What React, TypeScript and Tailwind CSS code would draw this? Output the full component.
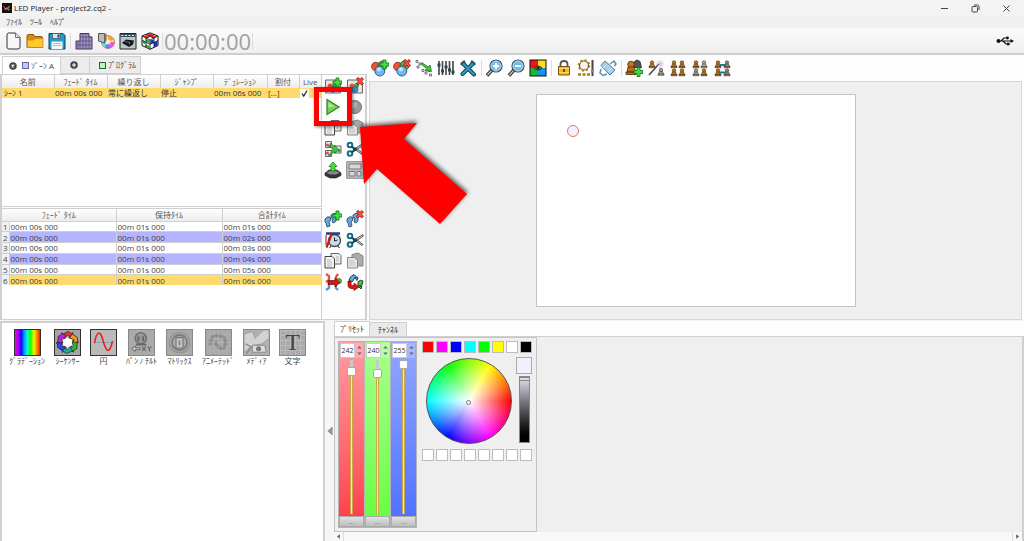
import { useState } from 'react'
import type { ReactNode } from 'react'

type Tool = { label: string; icon: ReactNode }

function Svg({ children, className = 'size-[18px]' }: { children: ReactNode; className?: string }) {
  return (
    <svg viewBox="0 0 18 18" className={className} fill="none" aria-hidden="true">
      {children}
    </svg>
  )
}

/* Badges shared by several icons */
const plusBadge = (
  <path d="M12 1h3v3h3v3h-3v3h-3V7H9V4h3z" fill="#3fe03f" stroke="#136c13" strokeWidth=".8" />
)
const crossBadge = (
  <path
    d="M10.5 1.5 12.5.5 14 2.6 15.600.5 17.500 2 15.600 4.300 17.500 6.500 15.500 8 14 6 12 8 10.400 6.500 12.300 4.300z"
    fill="#ff4d3d"
    stroke="#971414"
    strokeWidth=".8"
  />
)
const balls = (
  <>
    <circle cx="4.800" cy="7.500" r="4.200" fill="#f0562f" stroke="#5d2a18" strokeWidth=".8" />
    <circle cx="11.500" cy="6.500" r="4.500" fill="#4fae3c" stroke="#27502a" strokeWidth=".8" />
    <circle cx="8.800" cy="12" r="5" fill="#6db8f2" stroke="#24415c" strokeWidth=".8" />
    <circle cx="8" cy="10.500" r="2" fill="#c6e6ff" />
  </>
)
const steps = (
  <>
    <path
      d="M1 9q2-3 5-2l1 3-2 2 1 4-3 1-1-4-1-1zM7 5q3-3 6-1l-1 3 0 4-2 2-2-1 1-4-2 0z"
      fill="#65a9e3"
      stroke="#213c55"
      strokeWidth=".8"
    />
  </>
)
const pages = (
  <>
    <path d="M7 1.500h8l2 2V12H7z" fill="#eee" stroke="#666" />
    <path d="M1 4.500h7l2.500 2.500v9H1z" fill="#f4f4f4" stroke="#444" />
    <path d="M3 8h4M3 10h5M3 12h5M3 14h5M12 5h3M12 7h3M12 9h3" stroke="#aaa" strokeWidth=".8" />
  </>
)
const paste = (
  <>
    <path d="M6 2.500 12 1l5 3v10H6z" fill="#aaa" stroke="#888" />
    <path d="M1.500 5.500h7l3 3V16h-10z" fill="#e3e3e3" stroke="#888" />
    <path d="M3 9h5M3 11h6M3 13h6" stroke="#bbb" strokeWidth=".8" />
  </>
)
const scissors = (
  <>
    <path d="M7 9.500 17 3.500v2l-8 5zM7 8l3 0 7 5.500-1 1z" fill="#c9d4d6" stroke="#333" strokeWidth=".8" />
    <circle cx="4" cy="5" r="2.300" stroke="#11708a" strokeWidth="2" />
    <circle cx="4" cy="13.500" r="2.300" stroke="#11708a" strokeWidth="2" />
    <path d="m5.500 6.500 4 3-4 3" stroke="#0b4558" strokeWidth="2" />
  </>
)
const sceneCard = (
  <>
    <path d="M1.500 3h12l3 3v10h-15z" fill="#e6e6e6" stroke="#666" />
    <circle cx="6" cy="9" r="2.500" fill="#e45131" />
    <circle cx="10.500" cy="8.500" r="2.500" fill="#43a63c" />
    <circle cx="9" cy="12.500" r="3" fill="#3c8bd4" stroke="#234d79" strokeWidth=".6" />
  </>
)
const lens = (
  <>
    <path d="m7 11-5 5.500" stroke="#333" strokeWidth="3.500" />
    <path d="m6.500 11.500-4 4.500" stroke="#ccc" strokeWidth="1.200" />
    <circle cx="11" cy="7" r="6" fill="#6bbcf0" stroke="#4a4a4a" strokeWidth="1.200" />
    <circle cx="11" cy="7" r="5" stroke="#c3e4f8" strokeWidth=".8" />
  </>
)
const figure = (x: number, y: number, color: string) => (
  <g key={`${x}-${y}`} fill={color} stroke="#3c2a17" strokeWidth=".5">
    <circle cx={x + 3} cy={y + 2} r="1.800" />
    <path d={`M${x + 1.5} ${y + 3.500}h3l1.500 3h-6z`} />
    <path d={`M${x} ${y + 6}h6v1.300h-6z`} />
  </g>
)

const fileTools: Tool[] = [
  {
    label: '新規',
    icon: (
      <Svg>
        <path d="M4.500 1h7L16 5.500V15q0 2-2 2H5q-2 0-2-2V3q0-2 1.500-2z" fill="#f5f7f8" stroke="#333" />
        <path d="M11.500 1v4.500H16" fill="#d8dcde" stroke="#555" strokeWidth=".8" />
      </Svg>
    ),
  },
  {
    label: '開く',
    icon: (
      <Svg>
        <path d="M1 4q0-1.500 1.500-1.500h5l1.500 2h6q1.500 0 1.500 1.500v9.500H1z" fill="#d88a0a" stroke="#8d5a09" />
        <path d="M1.500 15.500V8h6l1.500-1.500h8v9z" fill="#ffc62e" stroke="#c98612" strokeWidth=".8" />
      </Svg>
    ),
  },
  {
    label: '保存',
    icon: (
      <Svg>
        <path d="M1 1.500h14l2 2V17H1z" fill="#1c9fd0" stroke="#0b3f57" />
        <path d="M4.500 1.500h8v5h-8z" fill="#dfe4e6" stroke="#27566b" strokeWidth=".7" />
        <path d="M9.500 2.500h2v3h-2z" fill="#333" />
        <path d="M3.500 9.500h11V17h-11z" fill="#f6f6f6" />
        <path d="M5 11.500h8M5 13.500h8" stroke="#aac" strokeWidth=".8" />
      </Svg>
    ),
  },
]

const setupTools: Tool[] = [
  {
    label: 'パッチ',
    icon: (
      <Svg>
        <path d="M1 9h4V1.500h9V5h3v12H1z" fill="#a193c6" stroke="#40375a" />
        <path
          d="M5 5h12M5 9h12M1 13h16M5 9v8M8 2v15M11 2v15M14 5v12M3 9v8"
          stroke="#5a4f7a"
          strokeWidth=".8"
        />
      </Svg>
    ),
  },
  {
    label: 'カラー',
    icon: (
      <Svg>
        <circle cx="11" cy="10" r="6.500" fill="#ffe75c" stroke="#666" strokeWidth=".6" />
        <path d="M11 10V3.500a6.500 6.500 0 0 1 6 4z" fill="#f8a13c" />
        <path d="m11 10 6.500 0a6.500 6.500 0 0 1-4 6z" fill="#ef55cf" />
        <path d="m11 10 2.500 6a6.500 6.500 0 0 1-6-1z" fill="#6b77ff" />
        <path d="m11 10-3.500 5a6.500 6.500 0 0 1-3-5z" fill="#54ddd9" />
        <circle cx="11" cy="10" r="2.500" fill="#fff" opacity=".75" />
        <path d="M1.500 1.500h6v9.500l-6-2z" fill="#bcbcbc" stroke="#555" />
        <path d="M7.500 1.500h2v7.500l-2 2z" fill="#777" />
      </Svg>
    ),
  },
  {
    label: 'デバイス',
    icon: (
      <Svg>
        <path d="M1 1.500h16V17H1z" fill="#bcc5cb" stroke="#222" />
        <path d="M1.500 2h15v3h-15z" fill="#394f63" />
        <path d="M2.500 3.500h2M6 3.500h2M9.500 3.500h2M13 3.500h2" stroke="#e8edf0" />
        <path d="m3 11 4-3.500 8 1-1 4-4 2.500z" fill="#171717" />
        <path d="m6 9.500 5 1-1 2" stroke="#888" strokeWidth=".8" />
      </Svg>
    ),
  },
  {
    label: '3D',
    icon: (
      <Svg>
        <path d="M9 .8 17 4v9.500L9 17.300 1 13.500V4z" fill="#fff" stroke="#111" />
        <path d="m9 1.300 3.500 1.500L9 4.300 5.500 2.800zM5 3.400l3.500 1.500L5.500 6 2 4.500zM13 3.400l3 1.100L12.500 6 9.500 4.700z" fill="#e32525" />
        <path d="m1.500 8 2.500 1v3l-2.500-1zM4.500 12.500 8.500 14v3l-4-1.800zM5 7l3.500 1.500V11L5 9.800z" fill="#20b23a" />
        <path d="m9.500 8.500 3.200-1.300V11l-3.200 1.200zM13 10.500l3.500-1.500v4.500L13 15z" fill="#1730e0" />
        <path d="m1 4 8 4 8-4M9 8v9M5 6v9.500M13 6v9.500M1 8.500l8 3.800 8-3.800M4.500 2.500l8.500 3.600M13.500 2.500 5 6.200" stroke="#111" strokeWidth=".8" />
      </Svg>
    ),
  },
]

const stageGroups: Tool[][] = [
  [
    { label: '追加', icon: <Svg>{balls}{plusBadge}</Svg> },
    { label: '削除', icon: <Svg>{balls}{crossBadge}</Svg> },
    {
      label: '整列',
      icon: (
        <Svg>
          <path d="M1 1.500h2v2H1zM4 4h2v2H4zM2 7h2v2H2zM10 13h2v2h-2zM13 10.500h2v2h-2zM14.500 15h2v2h-2zM7 10.500h2v2H7z" fill="#fff" stroke="#444" strokeWidth=".7" />
          <path d="m7 3.500 6 4.500 2-2 1.500 6.500-6.500-1 1.500-2L6 5z" fill="#3fc43b" stroke="#1d691b" strokeWidth=".7" />
        </Svg>
      ),
    },
    {
      label: 'フェーダー',
      icon: (
        <Svg>
          <path d="M2 2v14M5.500 2v14M9 2v14M12.500 2v14M16 2v14" stroke="#444" strokeWidth="1.600" />
          <path d="M.5 6h3M4 12h3M7.500 8h3M11 11h3M14.500 13h3" stroke="#2c4655" strokeWidth="3" />
        </Svg>
      ),
    },
    {
      label: '設定',
      icon: (
        <Svg>
          <path d="m4 4.500 11 11M14 4.500 3.500 15" stroke="#123f50" strokeWidth="4" strokeLinecap="round" />
          <path d="M1.500 4.500 4.500 6 6 4.500 4.500 1.500M16.500 4.500 13.500 6 12 4.500l1.500-3" stroke="#1b5d75" strokeWidth="2" />
          <path d="m4.500 5 10.500 10.500M13.500 5 3.500 15" stroke="#2f9fc0" strokeWidth="2" strokeLinecap="round" />
        </Svg>
      ),
    },
  ],
  [
    {
      label: '拡大',
      icon: (
        <Svg>
          {lens}
          <path d="M11 4v6M8 7h6" stroke="#fff" strokeWidth="2" />
        </Svg>
      ),
    },
    {
      label: '縮小',
      icon: (
        <Svg>
          {lens}
          <path d="M8 7h6" stroke="#fff" strokeWidth="2" />
        </Svg>
      ),
    },
    {
      label: '表示',
      icon: (
        <Svg>
          <path d="M.5.5h17v17H.5z" fill="#111" />
          <path d="M1.500 1.500H9V9H1.500z" fill="#f01414" />
          <path d="M9 1.500h7.500V9H9z" fill="#ffdf12" />
          <path d="M1.500 9H9v7.500H1.500z" fill="#16bb2d" />
          <path d="M9 9h7.500v7.500H9z" fill="#1592ea" />
          <path d="M5 9q4-4 8 0-4 4-8 0z" fill="#777" stroke="#333" />
          <circle cx="9" cy="9" r="1.500" fill="#222" />
        </Svg>
      ),
    },
  ],
  [
    {
      label: 'ロック',
      icon: (
        <Svg>
          <path d="M5.500 8V5q0-3 3.500-3t3.500 3v3" stroke="#555" strokeWidth="1.800" />
          <path d="M3.500 7.500h11v8.500h-11z" fill="#f8b516" stroke="#80560a" />
          <path d="M4 9.500h10M4 13.500h10" stroke="#ffd966" />
          <path d="M9 10v3" stroke="#432" strokeWidth="1.600" />
        </Svg>
      ),
    },
    {
      label: 'グリッド',
      icon: (
        <Svg>
          <circle cx="7" cy="6.500" r="4.500" fill="#f4f4f4" stroke="#76520c" strokeWidth="1.200" />
          <circle cx="7" cy="6.500" r="5.500" stroke="#b17b11" strokeWidth="1.600" strokeDasharray="2 2.300" />
          <path d="M1 15.500h3M5.500 15.500h3M10 15.500h3" stroke="#b17b11" strokeWidth="2.500" />
          <path d="M15.500 1v16" stroke="#444" strokeWidth="2" />
          <path d="M14 12h3" stroke="#888" strokeWidth="3" />
        </Svg>
      ),
    },
    {
      label: '回転',
      icon: (
        <Svg>
          <path d="m6 2 10 9-5 5L2 6.500z" fill="#a9cfe9" stroke="#547c98" />
          <path d="m11 5 4-3 2 3-1.500 2M2 10l-1 4 3 2.500 4-1.500" stroke="#5b8db0" strokeWidth="1.500" />
          <path d="m3 10 4-4M9 13l4-4" stroke="#d6e9f5" />
        </Svg>
      ),
    },
  ],
  [
    {
      label: 'グループ追加',
      icon: (
        <Svg>
          <path d="M9.500 2.500 12 1l3 1.500 1.500 6H9z" fill="#555" stroke="#222" strokeWidth=".8" />
          <circle cx="6" cy="5.500" r="3.300" fill="#c2761a" stroke="#50300b" strokeWidth=".8" />
          <path d="M3 8h6l2 5H2zM1 13h10v2.500H1z" fill="#b96e14" stroke="#50300b" strokeWidth=".8" />
          <g transform="translate(0 7.500)">{plusBadge}</g>
        </Svg>
      ),
    },
    {
      label: 'グループ選択',
      icon: (
        <Svg>
          {figure(2, 1.5, '#c17a20')}
          {figure(11, 9, '#999')}
          <path d="M2 16 12 5" stroke="#444" strokeWidth="1.500" />
          <path d="M13 1v8M9 5h8M10 2l6 6M16 2l-6 6" stroke="#d1a6e6" strokeWidth=".8" />
        </Svg>
      ),
    },
    {
      label: 'グループ',
      icon: (
        <Svg>
          {figure(2, 1.5, '#b87218')}
          {figure(10, 1.5, '#b87218')}
          {figure(2, 9.5, '#b87218')}
          {figure(10, 9.5, '#b87218')}
        </Svg>
      ),
    },
    {
      label: 'グループ解除',
      icon: (
        <Svg>
          {figure(2, 1.5, '#b87218')}
          {figure(10, 1.5, '#aaa')}
          {figure(2, 9.5, '#999')}
          {figure(10, 9.5, '#b87218')}
        </Svg>
      ),
    },
    {
      label: 'グループ入替',
      icon: (
        <Svg>
          {figure(2, 1.5, '#b87218')}
          {figure(11, 1.5, '#888')}
          {figure(2, 9.5, '#b87218')}
          {figure(11, 9.5, '#888')}
          <path d="M6 6h7M6 13.500h7" stroke="#1e7890" strokeWidth="1.800" />
        </Svg>
      ),
    },
  ],
]

const sceneTools: Tool[] = [
  { label: 'シーン追加', icon: <Svg>{sceneCard}{plusBadge}</Svg> },
  { label: 'シーン削除', icon: <Svg>{sceneCard}{crossBadge}</Svg> },
  {
    label: '再生',
    icon: (
      <Svg>
        <path d="M3 1.500 15 9 3 16.500z" fill="#6fd94d" stroke="#3a7a31" strokeWidth="1.200" />
        <path d="M4.500 4.500 11 8.500l-6.500 1z" fill="#a5ee8d" />
      </Svg>
    ),
  },
  {
    label: '停止',
    icon: (
      <Svg>
        <circle cx="9" cy="9" r="6.500" fill="#999" stroke="#777" />
        <circle cx="8" cy="7" r="3" fill="#b3b3b3" />
      </Svg>
    ),
  },
  { label: 'コピー', icon: <Svg>{pages}</Svg> },
  { label: '貼り付け', icon: <Svg>{paste}</Svg> },
  {
    label: '結合',
    icon: (
      <Svg>
        <path d="M1.500 1.500h6v6h-6zM1.500 10.500h6v6h-6zM11 6h6v7h-6z" fill="#e6e6e6" stroke="#666" />
        <circle cx="3.500" cy="5" r="1.500" fill="#e45131" />
        <circle cx="5.500" cy="6" r="1.500" fill="#3c8bd4" />
        <circle cx="3.500" cy="13" r="1.500" fill="#e45131" />
        <circle cx="5.500" cy="15" r="1.500" fill="#3c8bd4" />
        <circle cx="15" cy="10.500" r="1.800" fill="#43a63c" />
        <path d="m6.500 3 4 4 0-2 4 4.500-4 4v-2l-4 3.500 1-4.500 2-1-3-2z" fill="#49c53c" stroke="#1d691b" strokeWidth=".7" />
      </Svg>
    ),
  },
  { label: '切り取り', icon: <Svg>{scissors}</Svg> },
  {
    label: '書き出し',
    icon: (
      <Svg>
        <path d="m1 12 4-3h8l4 3v2.500l-5 2.500H6l-5-2.500z" fill="#333" stroke="#222" strokeWidth=".6" />
        <path d="m2.500 12 3-2h7l3 2-3.500 1.500H6z" fill="#888" />
        <path d="m9 1 4 4.500h-2V10H7V5.500H5z" fill="#4be03f" stroke="#1d7a1b" strokeWidth=".8" />
      </Svg>
    ),
  },
  {
    label: 'レイアウト',
    icon: (
      <Svg>
        <path d="M.7.7h16.600v16.600H.7z" fill="#c2c2c2" stroke="#888" />
        <path d="M3 3h12v5H3zM3 10.500h6V15H3zM11 10.500h4V15h-4z" fill="#d8d8d8" stroke="#777" />
      </Svg>
    ),
  },
]

const stepTools: Tool[] = [
  { label: 'ステップ追加', icon: <Svg>{steps}{plusBadge}</Svg> },
  { label: 'ステップ削除', icon: <Svg>{steps}{crossBadge}</Svg> },
  {
    label: 'タイム',
    icon: (
      <Svg>
        <circle cx="10.500" cy="9.500" r="6" fill="#c4dcec" stroke="#444" strokeWidth="1.300" />
        <path d="M10.500 6.500V10l3-1M7 15l-1.500 2M14 15l1.500 2" stroke="#222" />
        <path d="M2 2.500h14" stroke="#1e3f7c" strokeWidth="2.500" />
        <path d="M8 2 2.500 16.500" stroke="#c91717" strokeWidth="2.200" />
        <path d="M2 4v10" stroke="#a33" strokeWidth="1.200" />
      </Svg>
    ),
  },
  { label: 'ステップ切り取り', icon: <Svg>{scissors}</Svg> },
  { label: 'ステップコピー', icon: <Svg>{pages}</Svg> },
  { label: 'ステップ貼り付け', icon: <Svg>{paste}</Svg> },
  {
    label: '右へ移動',
    icon: (
      <Svg>
        <path d="m2 1 3 2v4L2 9M14 1l-2 3v3" stroke="#e35050" strokeWidth="2.300" />
        <path d="m2 17 3-2v-4M14 17l-2-2v-3" stroke="#4b9ad8" strokeWidth="2.300" />
        <circle cx="15" cy="8" r="2.500" fill="#4bc44d" stroke="#1d691b" strokeWidth=".7" />
        <path d="M4 7.500h7V5l5 4.500L11 14v-2.500H4z" fill="#e01414" stroke="#6d0d0d" strokeWidth=".7" />
      </Svg>
    ),
  },
  {
    label: '順番変更',
    icon: (
      <Svg>
        <path d="M3 7q1-4 5-5.500l2 2-2 2.500-2 3zM9 4.500q2-1 3 0l-1 3z" fill="#65a9e3" stroke="#213c55" />
        <path d="M12 9q2-3 5-1l-1 4-4 1zM13 14l3-1-1 3z" fill="#4cc34a" stroke="#1d491b" />
        <path d="M2 8v4q0 4 5 3.500h1V17.500l5-3.500-5-4v2.500H6q-1 0-1-1.500V8z" fill="#e01414" stroke="#6d0d0d" strokeWidth=".7" />
      </Svg>
    ),
  },
]

const recycleColors = ['#f03030', '#f59b1b', '#2bc02b', '#1faaa8', '#2c45e8', '#c31ee0']

const effects: Tool[] = [
  {
    label: 'ｸﾞﾗﾃﾞｰｼｮﾝ',
    icon: (
      <span className="block size-full bg-[linear-gradient(to_right,#ff00c8,#a000ff,#1a00ff,#00a2ff,#00ffd0,#1aff00,#e5ff00,#ff8c00,#ff1500)]" />
    ),
  },
  {
    label: 'ｼｰｹﾝｻｰ',
    icon: (
      <Svg className="size-full">
        <path d="M0 0h18v18H0z" fill="#a5a5a5" />
        <circle cx="9" cy="9" r="5" fill="#fff" />
        {recycleColors.map((color, i) => (
          <path
            key={color}
            d="M5.500 3 9.500 1l2.500 1.500.8-.8.2 4-3.500-.5.8-.9-1-.3L7 6.300z"
            fill={color}
            stroke="#222"
            strokeWidth=".5"
            transform={`rotate(${i * 60} 9 9)`}
          />
        ))}
      </Svg>
    ),
  },
  {
    label: '円',
    icon: (
      <Svg className="size-full">
        <path d="M0 0h18v18H0z" fill="#b9b9b9" />
        <path d="M2 9h14" stroke="#7aa2b8" strokeWidth=".6" />
        <path d="M2.500 9.500C4 1 6.500-.5 8.500 7s4.500 12 7 1" stroke="#e81c1c" strokeWidth="1.100" />
      </Svg>
    ),
  },
  {
    label: 'ﾊﾟﾝ / ﾁﾙﾄ',
    icon: (
      <Svg className="size-full">
        <path d="M0 0h18v18H0z" fill="#aaa" />
        <circle cx="8.500" cy="6" r="4" fill="#999" stroke="#707070" strokeWidth="1.200" />
        <path d="M6.800 8V4.500M10.200 8V4.500M5 10.500h7.500" stroke="#666" strokeWidth="1.300" />
        <path d="m2 13.500 2.500-2v1.300H8v1.400H4.500v1.300z" stroke="#666" strokeWidth=".7" fill="#ccc" />
        <path d="m9.500 12 2.500 3M12 12l-2.500 3M13.500 12l1.200 1.500L16 12M14.700 13.500v2" stroke="#666" strokeWidth=".8" />
      </Svg>
    ),
  },
  {
    label: 'ﾏﾄﾘｯｸｽ',
    icon: (
      <Svg className="size-full">
        <path d="M0 0h18v18H0z" fill="#aaa" />
        <circle cx="9" cy="9" r="7.300" stroke="#959595" />
        <circle cx="9" cy="9" r="5.400" stroke="#7d7d7d" strokeWidth="1.300" />
        <path d="M6.500 5.500h5v7.500h-5z" fill="#c5c5c5" stroke="#777" strokeWidth=".8" />
        <path d="M9 7.500V11" stroke="#777" />
      </Svg>
    ),
  },
  {
    label: 'ｱﾆﾒｰﾃｯﾄﾞ',
    icon: (
      <Svg className="size-full">
        <path d="M0 0h18v18H0z" fill="#a8a8a8" />
        <path d="M3 11Q3 3 9 4t5 6-5 2-1-3" stroke="#8a8a8a" strokeWidth="2.500" />
        <path d="M0 3h18M0 6h18M0 9h18M0 12h18M0 15h18M3 0v18M6 0v18M9 0v18M12 0v18M15 0v18" stroke="#bdbdbd" strokeWidth=".3" />
      </Svg>
    ),
  },
  {
    label: 'ﾒﾃﾞｨｱ',
    icon: (
      <Svg className="size-full">
        <path d="M0 0h18v18H0z" fill="#b0b0b0" />
        <path d="m0 3 6-2 2 5 6-6h4v6l-5 4-6 1-7 5z" fill="#d2d2d2" stroke="#9a9a9a" strokeWidth=".6" />
        <path d="M6 11h9l1 5H6z" fill="#dcdcdc" stroke="#888" strokeWidth=".7" />
        <circle cx="10.500" cy="13.500" r="1.800" fill="#777" />
        <path d="m1 10 4 2-3 5" stroke="#888" />
      </Svg>
    ),
  },
  {
    label: '文字',
    icon: (
      <span className="block size-full bg-[#aaa] bg-[linear-gradient(#bbb_1px,transparent_1px),linear-gradient(90deg,#bbb_1px,transparent_1px)] bg-size-[5px_5px] text-center text-[24px] leading-[25px] text-[#444] [font-family:'Liberation_Serif',serif]">
        T
      </span>
    ),
  },
]

const scenes = [
  { name: 'ｼｰﾝ 1', fade: '00m 00s 000', repeat: '常に繰返し', jump: '停止', duration: '00m 06s 000', assign: '[...]' },
]

const stepRows = [1, 2, 3, 4, 5, 6].map((n) => ({ n, fade: '00m 00s 000', hold: '00m 01s 000', total: `00m 0${n}s 000` }))

const swatches = [
  'bg-[#ff0000]',
  'bg-[#ff00ff]',
  'bg-[#0000ff]',
  'bg-[#00ffff]',
  'bg-[#00ff00]',
  'bg-[#ffff00]',
  'bg-white',
  'bg-black',
]

const channels = [
  { name: '赤', value: 242, column: 'bg-linear-to-b from-[#ff9aa2] to-[#ff3848]' },
  { name: '緑', value: 240, column: 'bg-linear-to-b from-[#a6ff8c] to-[#62ff3a]' },
  { name: '青', value: 255, column: 'bg-linear-to-b from-[#94a6ff] to-[#4e6eff]' },
]

const headCell = 'border-r border-[#cfcfcf] p-0 text-center font-normal text-[#555] last:border-r-0'

function ToolButton({ tool }: { tool: Tool }) {
  return (
    <button type="button" aria-label={tool.label} className="grid h-[21px] w-[22px] shrink-0 place-items-center">
      {tool.icon}
    </button>
  )
}

function Separator() {
  return <span className="mx-px h-4 w-px shrink-0 border-r border-[#dcdcdc]" />
}

function TitleBar() {
  return (
    <header className="flex h-4 shrink-0 items-center bg-[#f3f3f3] pl-[2px]">
      <Svg className="size-[10px]">
        <path d="M0 0h18v18H0z" fill="#111" />
        <path d="m2 4 4 5 3-1 6-4-3 6-6 3z" fill="#e86c1e" />
        <path d="m2 4 4 5-1 3z" fill="#dd23a4" />
        <path d="m9 12 6-2-3 4z" fill="#31b4d8" />
      </Svg>
      <h1 className="ml-[2px] grow text-[8px] text-[#222]">LED Player - project2.cq2 -</h1>
      <div className="flex items-center gap-[22px] pr-[13px] text-[#444]">
        <button type="button" aria-label="最小化">
          <Svg className="size-[9px]"><path d="M2 9h14" stroke="currentColor" strokeWidth="2" /></Svg>
        </button>
        <button type="button" aria-label="元に戻す">
          <Svg className="size-[9px]">
            <rect x="2" y="5" width="11" height="11" rx="2" stroke="currentColor" strokeWidth="2" />
            <path d="M6 2h7q3 0 3 3v7" stroke="currentColor" strokeWidth="2" />
          </Svg>
        </button>
        <button type="button" aria-label="閉じる">
          <Svg className="size-[9px]"><path d="m3 3 12 12M15 3 3 15" stroke="currentColor" strokeWidth="2" /></Svg>
        </button>
      </div>
    </header>
  )
}

function MenuBar() {
  return (
    <nav className="flex h-3 shrink-0 items-center gap-2 bg-[#f0f0f0] pl-[6px] text-[8px] leading-3 text-[#444]">
      <button type="button">ﾌｧｲﾙ</button>
      <button type="button">ﾂｰﾙ</button>
      <button type="button">ﾍﾙﾌﾟ</button>
    </nav>
  )
}

function MainToolbar() {
  return (
    <div className="flex h-[27px] shrink-0 items-center border-b-2 border-[#cfcfcf] bg-linear-to-b from-[#fbfbfb] to-[#efefef] pl-[2px]">
      {fileTools.map((tool) => <ToolButton key={tool.label} tool={tool} />)}
      <span className="flex w-[5px] justify-center"><Separator /></span>
      {setupTools.map((tool) => <ToolButton key={tool.label} tool={tool} />)}
      <Separator />
      <time className="text-[22px] leading-6 text-[#a0a0a0]">00:00:00</time>
      <Separator />
      <svg viewBox="0 0 18 10" className="mr-[10px] ml-auto h-[10px] w-[18px]" fill="none" aria-hidden="true">
        <path d="M2 5h13M5 5l3-3h3M7 5l3 3h2" stroke="#111" strokeWidth="1.200" />
        <circle cx="2.500" cy="5" r="2" fill="#111" />
        <path d="m14.500 3 3.500 2-3.500 2z" fill="#111" />
        <circle cx="11.500" cy="2" r="1.400" fill="#111" />
        <path d="M11 6.700h2.600v2.600H11z" fill="#111" />
      </svg>
    </div>
  )
}

function ZoneTabs() {
  return (
    <div className="flex h-[18px] shrink-0 items-stretch pl-[2px] text-[8px] text-[#444]">
      <button type="button" className="flex w-[59px] items-center border-x border-t border-[#d0d0d0] bg-white pl-[6px]">
        <Svg className="size-2">
          <circle cx="9" cy="9" r="8.500" fill="#444" />
          <path d="m6 6 6 6M12 6l-6 6" stroke="#fff" strokeWidth="2.500" />
        </Svg>
        <span className="mr-[2px] ml-[5px] size-[7px] border border-[#66669a] bg-[#c6c6ff]" />
        ｿﾞｰﾝ A
      </button>
      <button type="button" aria-label="ゾーン追加" className="grid w-[29px] place-items-center border-t border-r border-b border-[#d0d0d0] bg-[#ececec] pr-[2px]">
        <Svg className="size-2">
          <circle cx="9" cy="9" r="8.500" fill="#444" />
          <path d="M9 4.500v9M4.500 9h9" stroke="#fff" strokeWidth="2.500" />
        </Svg>
      </button>
      <button type="button" className="flex w-[51px] items-center gap-[2px] border-t border-r border-b border-[#d0d0d0] bg-[#ececec] pl-[9px] whitespace-nowrap">
        <span className="size-[7px] shrink-0 border border-[#2c5c34] bg-[#b9f5bd]" />
        ﾌﾟﾛｸﾞﾗﾑ
      </button>
    </div>
  )
}

function SceneTable() {
  return (
    <table className="w-full table-fixed border-collapse text-[8px] leading-[10px] text-[#333]">
      <colgroup>
        <col className="w-[52px]" />
        <col className="w-[53px]" />
        <col className="w-[53px]" />
        <col className="w-[53px]" />
        <col className="w-[54px]" />
        <col className="w-[32px]" />
        <col />
      </colgroup>
      <thead>
        <tr className="h-[13px] bg-linear-to-b from-white to-[#ececec]">
          {['名前', 'ﾌｪｰﾄﾞ ﾀｲﾑ', '繰り返し', 'ｼﾞｬﾝﾌﾟ', 'ﾃﾞｭﾚｰｼｮﾝ', '割付', 'Live'].map((title) => (
            <th key={title} className={headCell}>{title}</th>
          ))}
        </tr>
      </thead>
      <tbody>
        {scenes.map((scene) => (
          <tr key={scene.name} className="h-[10px] bg-[#ffdb6e] whitespace-nowrap">
            <td className="p-0 pl-[2px]">{scene.name}</td>
            <td className="p-0 pl-px">{scene.fade}</td>
            <td className="p-0 pl-px">{scene.repeat}</td>
            <td className="p-0 pl-px">{scene.jump}</td>
            <td className="p-0 pl-px">{scene.duration}</td>
            <td className="p-0 pl-px">{scene.assign}</td>
            <td className="p-0 pl-px">
              <label className="relative block size-[9px] leading-none">
                <input type="checkbox" aria-label="Live" defaultChecked className="peer block size-[9px] appearance-none bg-white" />
                <Svg className="pointer-events-none absolute inset-0 hidden size-[9px] peer-checked:block">
                  <path d="m4 9 3.500 5L14 3" stroke="#222" strokeWidth="2.500" />
                </Svg>
              </label>
            </td>
          </tr>
        ))}
      </tbody>
    </table>
  )
}

function StepTable() {
  return (
    <table className="h-[76px] w-full table-fixed border-collapse text-[8px] leading-[9px] text-[#444]">
      <colgroup>
        <col className="w-[7px]" />
        <col className="w-[107px]" />
        <col className="w-[106px]" />
        <col />
      </colgroup>
      <thead>
        <tr className="h-3 bg-linear-to-b from-white to-[#ececec]">
          <th colSpan={2} className={headCell}>ﾌｪｰﾄﾞ ﾀｲﾑ</th>
          <th className={headCell}>保持ﾀｲﾑ</th>
          <th className={headCell}>合計ﾀｲﾑ</th>
        </tr>
      </thead>
      <tbody>
        {stepRows.map((row) => (
          <tr
            key={row.n}
            className={`border-t border-[#d0d0d0] ${row.n === 6 ? 'bg-[#ffdb6e]' : row.n % 2 === 0 ? 'bg-[#b4b4ff]' : 'bg-white'}`}
          >
            <th className="border-r border-[#cfcfcf] bg-[#f0f0f0] p-0 text-center font-normal">{row.n}</th>
            <td className="border-r border-[#cfcfcf] p-0 pl-px">{row.fade}</td>
            <td className="border-r border-[#cfcfcf] p-0 pl-px">{row.hold}</td>
            <td className="p-0 pl-px">{row.total}</td>
          </tr>
        ))}
      </tbody>
    </table>
  )
}

function ToolGrid({ tools }: { tools: Tool[] }) {
  return (
    <div className="grid w-[43px] shrink-0 grid-cols-[22px_21px] content-start">
      {tools.map((tool) => <ToolButton key={tool.label} tool={tool} />)}
    </div>
  )
}

function ScenePanel() {
  return (
    <section className="flex w-[367px] shrink-0 flex-col bg-[#fdfdfd] pt-px">
      <ZoneTabs />
      <div className="flex grow flex-col border-x-2 border-t border-b border-[#d0d0d0]">
        <div className="flex h-[132px] shrink-0">
          <div className="grow border-r border-b border-[#cfcfcf] bg-white">
            <SceneTable />
          </div>
          <ToolGrid tools={sceneTools} />
        </div>
        <div className="flex grow pt-px">
          <div className="grow border-t border-r border-[#cfcfcf] bg-white">
            <StepTable />
          </div>
          <ToolGrid tools={stepTools} />
        </div>
      </div>
    </section>
  )
}

function StagePanel() {
  return (
    <section className="flex min-w-0 grow flex-col bg-[#fdfdfd] px-[2px]">
      <div className="flex h-[26px] shrink-0 items-center">
        {stageGroups.map((group, i) => (
          <div key={group[0].label} className="flex items-center">
            {i > 0 && <span className="flex w-1 justify-center"><Separator /></span>}
            {group.map((tool) => <ToolButton key={tool.label} tool={tool} />)}
          </div>
        ))}
      </div>
      <div className="grid grow place-items-center border border-[#d6d6d6] bg-[#efefef]">
        <div className="relative aspect-3/2 w-1/2 max-w-[320px] border border-[#c4c4c4] bg-white">
          <span className="absolute top-[30px] left-[30px] size-3 rounded-full border border-[#e8775a] bg-[#f2f0ff]" />
        </div>
      </div>
    </section>
  )
}

function EffectsPanel() {
  return (
    <section className="w-[325px] shrink-0 border-2 border-b-0 border-[#d0d0d0] bg-white pt-[6px] pl-[7px]">
      <div className="flex gap-[9px]">
        {effects.map((effect, i) => (
          <button key={effect.label} type="button" className="flex flex-col items-center text-[8px] leading-[10px] text-[#444]">
            <span className={`block size-[27px] overflow-hidden border ${i < 3 ? 'border-[#333]' : 'border-[#888]'}`}>{effect.icon}</span>
            <span className="whitespace-nowrap">{effect.label}</span>
          </button>
        ))}
      </div>
    </section>
  )
}

function ChannelColumn({ name, column, value, onChange }: { name: string; column: string; value: number; onChange: (v: number) => void }) {
  const top = ((255 - value) / 255) * 100
  return (
    <div className={`flex w-[25px] flex-col items-center ${column}`}>
      <div className="mt-px flex h-[15px] w-[23px] shrink-0">
        <input
          aria-label={name}
          value={value}
          onChange={(e) => onChange(Math.min(255, Number(e.target.value) || 0))}
          className="h-full w-[15px] min-w-0 border border-[#ccc] bg-white p-0 text-center text-[7px] text-[#333]"
        />
        <span className="flex w-2 flex-col justify-around bg-white/20 py-px text-[#666]">
          <button type="button" aria-label={`${name} 増`} onClick={() => onChange(Math.min(255, value + 1))}>
            <Svg className="mx-auto size-[5px]"><path d="m1 13 8-9 8 9z" fill="currentColor" /></Svg>
          </button>
          <button type="button" aria-label={`${name} 減`} onClick={() => onChange(Math.max(0, value - 1))}>
            <Svg className="mx-auto size-[5px]"><path d="m1 5 8 9 8-9z" fill="currentColor" /></Svg>
          </button>
        </span>
      </div>
      <div className="relative mt-[2px] mb-[2px] w-[9px] grow">
        <span className="absolute inset-y-0 left-[3px] w-[3px] bg-[#c9c9c9]" />
        <span className="absolute bottom-0 left-[3px] w-[3px] border-x border-[#c9a94a] bg-[#ffe9a0]" style={{ top: `${top}%` }} />
        <input
          type="range"
          min={0}
          max={255}
          value={value}
          aria-label={`${name} レベル`}
          onChange={(e) => onChange(Number(e.target.value))}
          className="absolute inset-0 m-0 h-full w-[9px] appearance-none bg-transparent [direction:rtl] [writing-mode:vertical-lr] [&::-webkit-slider-thumb]:size-[9px] [&::-webkit-slider-thumb]:appearance-none [&::-webkit-slider-thumb]:rounded-xs [&::-webkit-slider-thumb]:border [&::-webkit-slider-thumb]:border-[#aaa] [&::-webkit-slider-thumb]:bg-white"
        />
      </div>
      <button type="button" aria-label={`${name} 詳細`} className="h-[11px] w-full shrink-0 border border-[#aaa] bg-linear-to-b from-[#e2e2e2] to-[#bdbdbd] text-[7px] leading-[7px] text-[#777]">
        ...
      </button>
    </div>
  )
}

function ColorPicker() {
  return (
    <div className="flex w-[110px] flex-col">
      <div className="flex justify-between">
        {swatches.map((swatch) => (
          <button key={swatch} type="button" aria-label="色" className={`size-3 border border-[#bbb] ${swatch}`} />
        ))}
      </div>
      <div className="mt-[4px] flex h-[87px] items-start justify-between">
        <div className="relative mt-px ml-1 size-[86px] rounded-full border border-[#555] bg-[radial-gradient(closest-side,white,transparent),conic-gradient(from_90deg,red,magenta,blue,cyan,lime,yellow,red)]">
          <span className="absolute top-[41px] left-[39px] size-[5px] rounded-full border border-[#777] bg-white" />
        </div>
        <div className="flex w-4 flex-col items-center gap-[2px]">
          <span className="h-[17px] w-4 border border-[#aaa] bg-[#f2f0ff]" />
          <input
            type="range"
            defaultValue={100}
            aria-label="明るさ"
            className="h-[67px] w-[11px] appearance-none border border-[#888] bg-linear-to-b from-[#e6e4f4] to-black [direction:rtl] [writing-mode:vertical-lr] [&::-webkit-slider-thumb]:h-[4px] [&::-webkit-slider-thumb]:w-[11px] [&::-webkit-slider-thumb]:appearance-none [&::-webkit-slider-thumb]:border [&::-webkit-slider-thumb]:border-[#888] [&::-webkit-slider-thumb]:bg-[#ddd]"
          />
        </div>
      </div>
      <div className="mt-[5px] flex justify-between">
        {swatches.map((swatch, i) => (
          <button key={swatch} type="button" aria-label={`ユーザー色 ${i + 1}`} className="size-3 border border-[#bbb] bg-white" />
        ))}
      </div>
    </div>
  )
}

function PresetPanel() {
  const [levels, setLevels] = useState(channels.map((c) => c.value))

  return (
    <section className="flex min-w-0 grow flex-col bg-[#fdfdfd]">
      <div className="flex h-[15px] shrink-0 items-stretch text-[8px] text-[#333]">
        <button type="button" className="w-[36px] border-x border-t border-[#cfcfcf] bg-white">ﾌﾟﾘｾｯﾄ</button>
        <button type="button" className="mt-px w-[37px] border-t border-r border-[#cfcfcf] bg-[#e9e9e9]">ﾁｬﾝﾈﾙ</button>
      </div>
      <div className="flex grow border-t border-r-2 border-[#d0d0d0] bg-[#efefef]">
        <div className="flex w-[203px] border border-[#c4c4c4] p-[3px]">
          <div className="flex gap-px border border-[#b5b5b5] bg-[#b5b5b5]">
            {channels.map((channel, i) => (
              <ChannelColumn
                key={channel.name}
                name={channel.name}
                column={channel.column}
                value={levels[i]}
                onChange={(v) => setLevels(levels.map((old, j) => (j === i ? v : old)))}
              />
            ))}
          </div>
          <div className="ml-[5px]">
            <ColorPicker />
          </div>
        </div>
      </div>
      <div className="flex h-[9px] shrink-0 items-center justify-between border-r-2 border-[#d0d0d0] bg-[#f8f8f8] text-[#666]">
        <button type="button" aria-label="左へスクロール" className="grid h-full w-[10px] place-items-center border-r border-[#ddd]">
          <Svg className="size-[5px]"><path d="M14 1v16L3 9z" fill="currentColor" /></Svg>
        </button>
        <button type="button" aria-label="右へスクロール" className="grid h-full w-[10px] place-items-center border-l border-[#ddd]">
          <Svg className="size-[5px]"><path d="M4 1v16l11-8z" fill="currentColor" /></Svg>
        </button>
      </div>
    </section>
  )
}

/* Tutorial marks over the play button */
function PlayCallout() {
  return (
    <div className="pointer-events-none absolute top-[87px] left-[314px]">
      <div className="h-[39px] w-[38px] border-5 border-[#ff0000] shadow-[1px_1px_3px_rgba(0,0,0,0.5)]" />
      <svg viewBox="0 0 110 105" className="absolute top-[34px] left-[44px] h-[105px] w-[110px] overflow-visible drop-shadow-[1px_-2px_2px_rgba(0,0,0,0.6)]" aria-hidden="true">
        <path d="M2 6 59 2 46 18 109 73 82 103 19 48 6 63z" fill="#ff0000" />
      </svg>
    </div>
  )
}

export default function App() {
  return (
    <div className="relative flex min-h-screen flex-col overflow-hidden bg-[#f4f4f4] [font-family:'Open_Sans','Noto_Sans_CJK_JP',sans-serif]">
      <TitleBar />
      <MenuBar />
      <MainToolbar />
      <main className="flex grow flex-col">
        <div className="flex h-[265px] shrink-0">
          <ScenePanel />
          <StagePanel />
        </div>
        <div className="flex grow pt-px">
          <EffectsPanel />
          <button type="button" aria-label="パネルを閉じる" className="grid w-[9px] shrink-0 place-items-center bg-[#f6f6f6]">
            <Svg className="size-2"><path d="M14 0v18L4 9z" fill="#999" stroke="#666" /></Svg>
          </button>
          <PresetPanel />
        </div>
      </main>
      <PlayCallout />
    </div>
  )
}
